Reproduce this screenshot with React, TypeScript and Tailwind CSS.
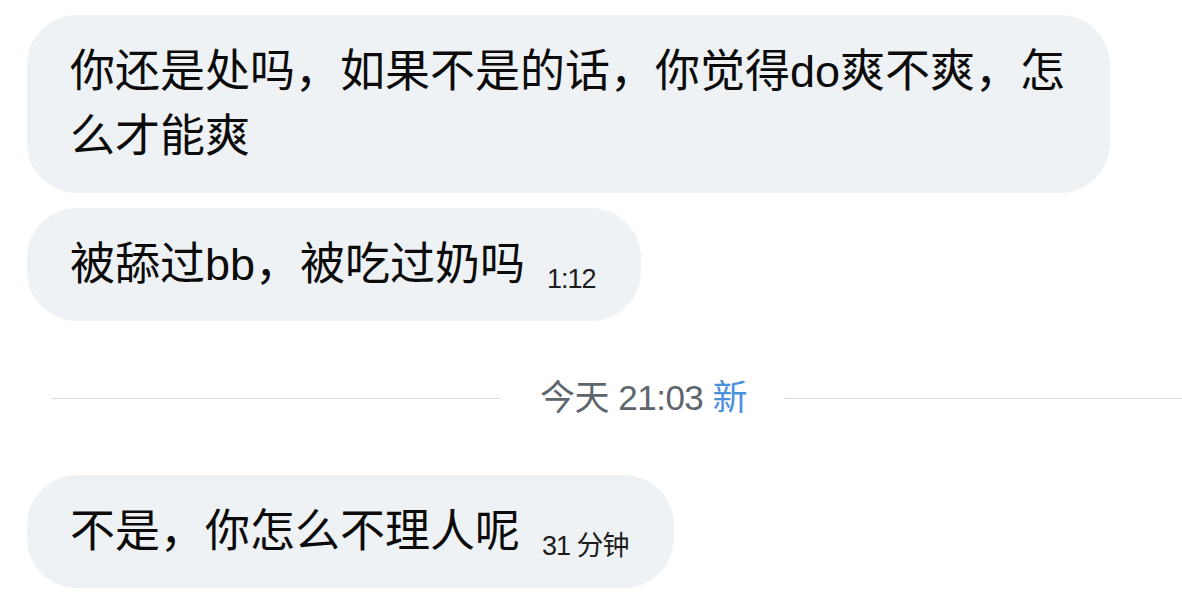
const font = {
  fontFamily: '"Liberation Sans", "Noto Sans CJK SC", sans-serif',
};

type Msg = { lines: string[]; time?: string };

const before: Msg[] = [
  { lines: ['你还是处吗，如果不是的话，你觉得do爽不爽，怎', '么才能爽'] },
  { lines: ['被舔过bb，被吃过奶吗'], time: '1:12' },
];

const after: Msg[] = [{ lines: ['不是，你怎么不理人呢'], time: '31 分钟' }];

function Bubble({ msg }: { msg: Msg }) {
  return (
    <div className="flex">
      <div className="rounded-[50px] bg-[#eff2f4] pl-[43px] pr-[45px] py-[24px] text-[#0b0b0b]">
        <p className="whitespace-nowrap text-[45px] leading-[65px]">
          {msg.lines.map((l, i) => (
            <span key={i}>
              {i > 0 && <br />}
              {l}
            </span>
          ))}
          {msg.time && (
            <span className="ml-[22px] inline-block translate-y-[8px] text-[27px] leading-none tracking-[-1px] text-[#1c1c1c]">
              {msg.time}
            </span>
          )}
        </p>
      </div>
    </div>
  );
}

function DayDivider() {
  return (
    <div className="my-[57px] flex items-center pl-[51px]">
      <div className="h-px w-[449px] bg-[#d9dcdf]" />
      <div className="ml-[40px] mr-[38px] text-[35px] leading-[40px] tracking-[-0.5px] text-[#5d656d]">
        今天 21:03 <span className="text-[#4a90dc]">新</span>
      </div>
      <div className="h-px flex-1 bg-[#d9dcdf]" />
    </div>
  );
}

export default function App() {
  return (
    <div className="h-[598px] w-[1182px] overflow-hidden bg-white pt-[15px] pl-[27px]" style={font}>
      <div className="flex flex-col gap-[15px]">
        {before.map((m, i) => (
          <Bubble key={i} msg={m} />
        ))}
      </div>
      <div className="-ml-[27px]">
        <DayDivider />
      </div>
      <div className="flex flex-col gap-[15px]">
        {after.map((m, i) => (
          <Bubble key={i} msg={m} />
        ))}
      </div>
    </div>
  );
}
